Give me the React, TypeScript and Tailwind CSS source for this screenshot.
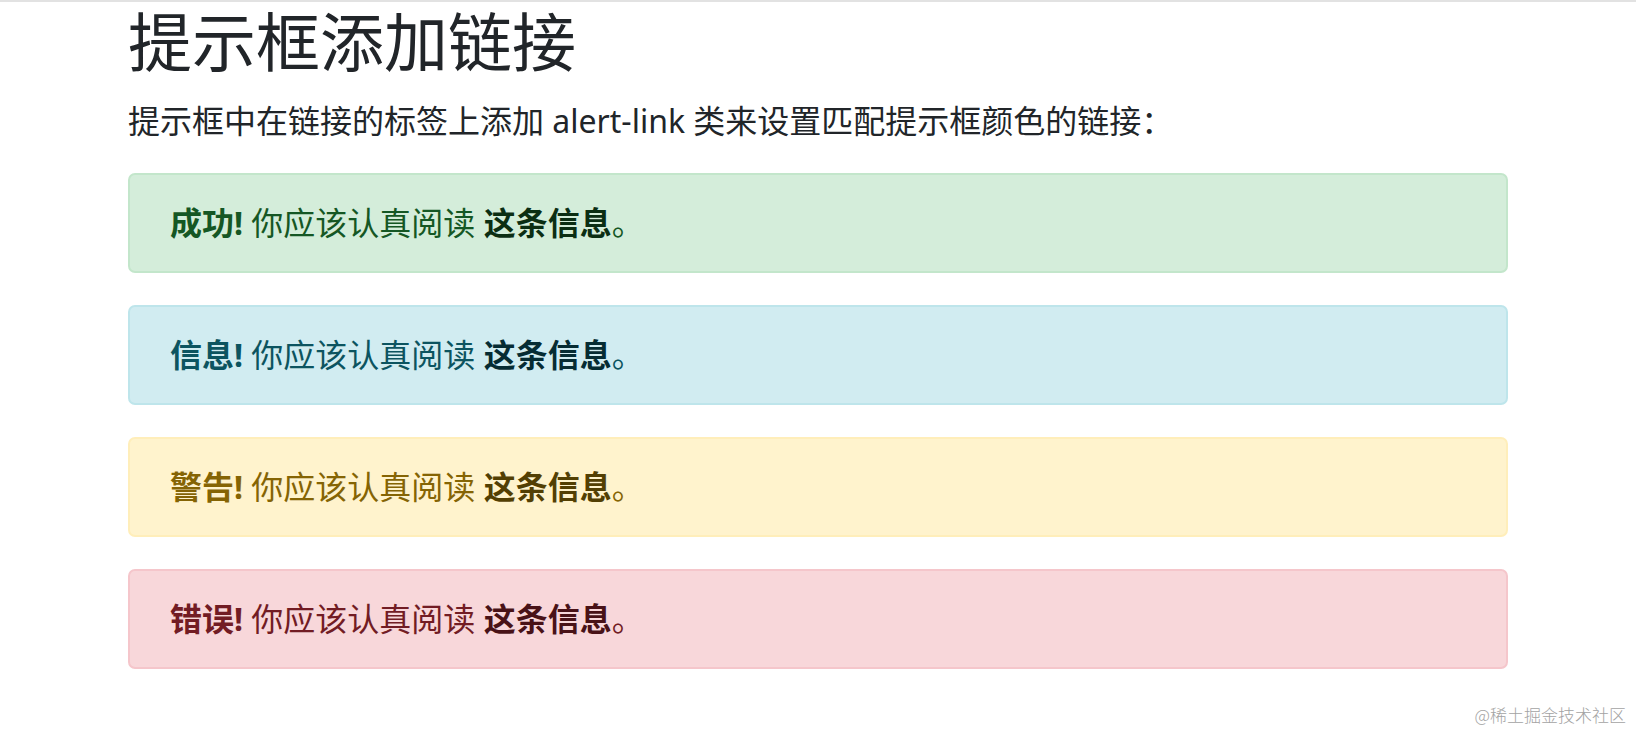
const alerts = [
  { label: '成功!', box: 'bg-[#d4edda] border-[#c3e6cb] text-[#155724]', link: 'text-[#0b2e13]' },
  { label: '信息!', box: 'bg-[#d1ecf1] border-[#bee5eb] text-[#0c5460]', link: 'text-[#062c33]' },
  { label: '警告!', box: 'bg-[#fff3cd] border-[#ffeeba] text-[#856404]', link: 'text-[#533f03]' },
  { label: '错误!', box: 'bg-[#f8d7da] border-[#f5c6cb] text-[#721c24]', link: 'text-[#491217]' },
];

export default function App() {
  return (
    <div className="relative min-h-screen bg-white border-t-2 border-[#e2e2e2] font-['Noto_Sans','Noto_Sans_CJK_SC',sans-serif] text-[#212529]">
      <div className="w-[1380px] mx-auto">
        <h1 className="text-[64px] leading-[1.2] font-normal pt-[2px] mb-4">提示框添加链接</h1>
        <p className="text-[32px] leading-[1.5] mb-[28px]">提示框中在链接的标签上添加 alert-link 类来设置匹配提示框颜色的链接：</p>

        <div className="flex flex-col gap-8">
          {alerts.map((a) => (
            <div key={a.label} className={`border-2 rounded-[7px] px-10 py-6 text-[32px] leading-[1.5] ${a.box}`}>
              <strong className="font-bold">{a.label}</strong> 你应该认真阅读{' '}
              <a href="#" className={`font-bold ${a.link}`}>这条信息</a>。
            </div>
          ))}
        </div>
      </div>

      {/* watermark */}
      <div className="absolute right-[10px] top-[704px] text-[17px] leading-none text-[#a3a3a3] font-['Noto_Sans_CJK_SC',serif] font-light">
        @稀土掘金技术社区
      </div>
    </div>
  );
}
